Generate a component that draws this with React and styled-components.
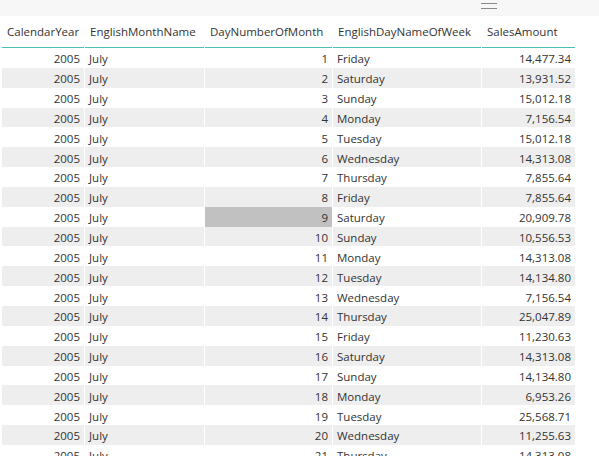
import styled, { createGlobalStyle } from "styled-components";

const GlobalStyle = createGlobalStyle`
  html, body {
    margin: 0;
    padding: 0;
    background: #ffffff;
    overflow: hidden;
  }
`;

const Page = styled.div`
  width: 599px;
  height: 456px;
  overflow: hidden;
  font-family: "Open Sans", "Noto Sans", sans-serif;
  font-size: 11.5px;
  color: #333333;
`;

const TopBar = styled.div`
  height: 16px;
  background: #f7f7f7;
  display: flex;
  align-items: flex-start;
  padding-left: 481px;
`;

const Handle = styled.div`
  width: 16px;
  height: 4px;
  margin-top: 3px;
  border-top: 1px solid #8a8a8a;
  border-bottom: 1px solid #8a8a8a;
`;

const Grid = styled.div`
  display: grid;
  grid-template-columns: 82px 119px 127px 148px 93px;
  grid-template-rows: 32px;
  grid-auto-rows: 19.85px;
  column-gap: 1px;
  margin-left: 2px;
`;

const HeadCell = styled.div`
  display: flex;
  align-items: center;
  padding: 0 4px 0 5px;
  border-bottom: 1px solid #4cbfb4;
  white-space: nowrap;
  overflow: hidden;
  color: #333333;
`;

const Cell = styled.div`
  display: flex;
  align-items: center;
  justify-content: ${(p) => (p.$num ? "flex-end" : "flex-start")};
  padding: ${(p) => (p.$num ? "2px 4px 0 0" : "2px 0 0 4px")};
  background: ${(p) => (p.$selected ? "#c1c1c1" : p.$alt ? "#eeeeee" : "#ffffff")};
  white-space: nowrap;
  overflow: hidden;
`;

const rows = [
  [1, "Friday", "14,477.34"],
  [2, "Saturday", "13,931.52"],
  [3, "Sunday", "15,012.18"],
  [4, "Monday", "7,156.54"],
  [5, "Tuesday", "15,012.18"],
  [6, "Wednesday", "14,313.08"],
  [7, "Thursday", "7,855.64"],
  [8, "Friday", "7,855.64"],
  [9, "Saturday", "20,909.78"],
  [10, "Sunday", "10,556.53"],
  [11, "Monday", "14,313.08"],
  [12, "Tuesday", "14,134.80"],
  [13, "Wednesday", "7,156.54"],
  [14, "Thursday", "25,047.89"],
  [15, "Friday", "11,230.63"],
  [16, "Saturday", "14,313.08"],
  [17, "Sunday", "14,134.80"],
  [18, "Monday", "6,953.26"],
  [19, "Tuesday", "25,568.71"],
  [20, "Wednesday", "11,255.63"],
  [21, "Thursday", "14,313.08"],
  [22, "Friday", "12,708.41"],
];

const headers = [
  "CalendarYear",
  "EnglishMonthName",
  "DayNumberOfMonth",
  "EnglishDayNameOfWeek",
  "SalesAmount",
];

export default function App() {
  return (
    <Page>
      <GlobalStyle />
      <TopBar>
        <Handle />
      </TopBar>
      <Grid>
        {headers.map((h) => (
          <HeadCell key={h}>{h}</HeadCell>
        ))}
        {rows.map(([day, name, amount], i) => {
          const alt = i % 2 === 1;
          return [
            <Cell key={`y${day}`} $num $alt={alt}>2005</Cell>,
            <Cell key={`m${day}`} $alt={alt}>July</Cell>,
            <Cell key={`d${day}`} $num $alt={alt} $selected={day === 9}>
              {day}
            </Cell>,
            <Cell key={`w${day}`} $alt={alt}>{name}</Cell>,
            <Cell key={`s${day}`} $num $alt={alt}>{amount}</Cell>,
          ];
        })}
      </Grid>
    </Page>
  );
}
